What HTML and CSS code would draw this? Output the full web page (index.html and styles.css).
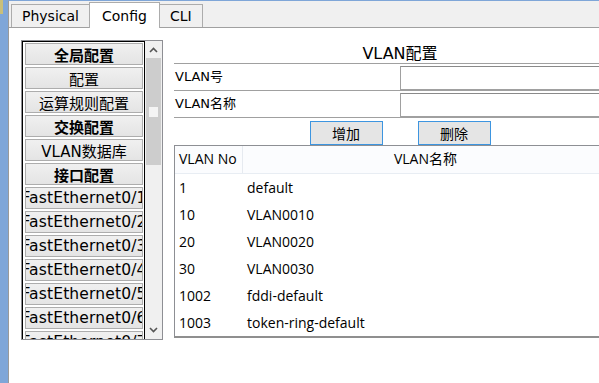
FILE: index.html
```html
<!DOCTYPE html>
<html>
<head>
<meta charset="utf-8">
<link rel="stylesheet" href="styles.css">
</head>
<body>
<div class="strip"><div class="strip-mark"></div></div>
<div class="main">
  <div class="tabbar">
    <div class="tab">Physical</div>
    <div class="tab active">Config</div>
    <div class="tab">CLI</div>
  </div>
  <div class="content">
    <div class="listbox">
      <div class="list">
        <div class="item bold">全局配置</div>
        <div class="item">配置</div>
        <div class="item">运算规则配置</div>
        <div class="item bold">交换配置</div>
        <div class="item">VLAN数据库</div>
        <div class="item bold">接口配置</div>
        <div class="item fe">FastEthernet0/1</div>
        <div class="item fe">FastEthernet0/2</div>
        <div class="item fe">FastEthernet0/3</div>
        <div class="item fe">FastEthernet0/4</div>
        <div class="item fe">FastEthernet0/5</div>
        <div class="item fe">FastEthernet0/6</div>
        <div class="item fe">FastEthernet0/7</div>
      </div>
      <div class="sb">
        <div class="sb-btn"><svg width="17" height="17" viewBox="0 0 17 17"><polyline points="5,11 8.5,7.5 12,11" fill="none" stroke="#555" stroke-width="1.6"/></svg></div>
        <div class="sb-thumb"><div class="sb-grip"></div></div>
        <div class="sb-track"></div>
        <div class="sb-btn"><svg width="17" height="17" viewBox="0 0 17 17"><polyline points="5,6 8.5,9.5 12,6" fill="none" stroke="#555" stroke-width="1.6"/></svg></div>
      </div>
    </div>
    <div class="panel">
      <div class="title">VLAN配置</div>
      <div class="frow"><div class="flabel">VLAN号</div><div class="finput"></div></div>
      <div class="frow"><div class="flabel">VLAN名称</div><div class="finput"></div></div>
      <div class="btnrow">
        <div class="btn">增加</div>
        <div class="btn">删除</div>
      </div>
      <div class="table">
        <div class="trow head"><div class="c1">VLAN No</div><div class="c2 center">VLAN名称</div></div>
        <div class="trow"><div class="c1">1</div><div class="c2">default</div></div>
        <div class="trow"><div class="c1">10</div><div class="c2">VLAN0010</div></div>
        <div class="trow"><div class="c1">20</div><div class="c2">VLAN0020</div></div>
        <div class="trow"><div class="c1">30</div><div class="c2">VLAN0030</div></div>
        <div class="trow"><div class="c1">1002</div><div class="c2">fddi-default</div></div>
        <div class="trow"><div class="c1">1003</div><div class="c2">token-ring-default</div></div>
      </div>
    </div>
  </div>
</div>
</body>
</html>
```
FILE: styles.css
```css
html, body {
  margin: 0;
  padding: 0;
  width: 599px;
  height: 383px;
  overflow: hidden;
  background: #fff;
}
body {
  display: flex;
  font-family: "DejaVu Sans", "Noto Sans CJK SC", sans-serif;
  color: #000;
}
.strip {
  width: 8px;
  flex: none;
  background: #7fa6d8;
}
.strip-mark {
  width: 3px;
  height: 14px;
  background: #c9bf7a;
}
.main {
  flex: 1;
  min-width: 0;
  border-left: 1px solid #9a9a9a;
  border-top: 1px solid #7fa6d8;
  display: flex;
  flex-direction: column;
}
.tabbar {
  height: 26px;
  flex: none;
  background: #f0f0f0;
  border-bottom: 1px solid #a0a0a0;
  display: flex;
  align-items: flex-end;
  padding-left: 2px;
}
.tab {
  height: 22px;
  box-sizing: content-box;
  border: 1px solid #acacac;
  border-bottom: none;
  background: #f0f0f0;
  font-size: 14px;
  line-height: 22px;
  padding: 0 10px;
  margin-left: -1px;
}
.tab:first-child { margin-left: 0; }
.tab.active {
  background: #fff;
  height: 25px;
  line-height: 26px;
  margin-bottom: -1px;
  position: relative;
  padding: 0 12px;
}
.content {
  flex: 1;
  background: #fff;
  display: flex;
  align-items: flex-start;
  padding: 12px 0 0 12px;
  overflow: hidden;
}
.listbox {
  flex: none;
  display: flex;
  border: 1px solid #8e8f94;
  height: 298px;
}
.list {
  border: 1px solid #000;
  border-bottom: none;
  padding: 1px 0 0 2px;
  box-sizing: content-box;
  overflow: hidden;
  width: 119px;
}
.item {
  width: 118px;
  height: 22px;
  box-sizing: border-box;
  border: 1px solid #adadad;
  background: linear-gradient(#f0f0f0, #e4e4e4);
  margin-bottom: 2px;
  display: flex;
  justify-content: center;
  align-items: center;
  white-space: nowrap;
  overflow: hidden;
  font-size: 15px;
  font-family: "DejaVu Sans", "Noto Sans CJK SC", sans-serif;
}
.item.bold { font-weight: bold; }
.item.fe { font-size: 15.5px; letter-spacing: 0.15px; }
.sb {
  width: 17px;
  background: #f0f0f0;
  display: flex;
  flex-direction: column;
}
.sb-btn {
  height: 17px;
  flex: none;
}
.sb-btn svg { display: block; }
.sb-thumb {
  height: 107px;
  margin: 0 1px;
  background: #cdcdcd;
  padding-top: 49px;
  box-sizing: border-box;
}
.sb-grip {
  width: 9px;
  height: 10px;
  margin-left: 3px;
  background: #f4f4f4;
}
.sb-track { flex: 1; }
.panel {
  flex: none;
  width: 452px;
  margin-left: 11px;
  font-family: "DejaVu Sans", "Noto Sans CJK SC", sans-serif;
}
.title {
  height: 23px;
  line-height: 27px;
  text-align: center;
  font-size: 16px;
}
.frow {
  display: flex;
  border-top: 1px solid #a0a0a0;
  padding-top: 2px;
  box-sizing: border-box;
  height: 27px;
}
.frow + .btnrow { border-top: 1px solid #a0a0a0; }
.flabel {
  width: 226px;
  font-size: 13px;
  line-height: 22px;
  padding-left: 1px;
  box-sizing: border-box;
}
.finput {
  flex: 1;
  height: 24px;
  box-sizing: border-box;
  border: 1px solid #a0a0a0;
  border-top-color: #8a8a8a;
  background: #fff;
}
.btnrow {
  display: flex;
  justify-content: center;
  gap: 35px;
  padding-top: 3px;
  height: 27px;
  box-sizing: border-box;
  margin-bottom: 1px;
}
.btn {
  width: 73px;
  height: 24px;
  box-sizing: border-box;
  border: 1px solid #3d95e0;
  background: #e5e5e5;
  font-family: "Noto Sans CJK SC", sans-serif;
  font-size: 14px;
  line-height: 22px;
  text-align: center;
}
.table {
  border: 1px solid #8d8f94;
  border-bottom: 2px solid #8f8f8f;
  font-family: "Open Sans", "Noto Sans CJK SC", sans-serif;
  font-size: 14px;
}
.trow {
  display: flex;
  height: 27px;
  align-items: center;
  padding-right: 17px;
}
.trow.head {
  background: #fbfcfe;
  border-bottom: 1px solid #e8edf3;
  align-items: stretch;
  line-height: 26px;
}
.c1 {
  width: 68px;
  padding-left: 4px;
  box-sizing: border-box;
  flex: none;
}
.head .c1 {
  border-right: 1px solid #e6eaf0;
}
.c2 {
  flex: 1;
  padding-left: 4px;
}
.c2.center { text-align: center; padding-left: 0; }
```
